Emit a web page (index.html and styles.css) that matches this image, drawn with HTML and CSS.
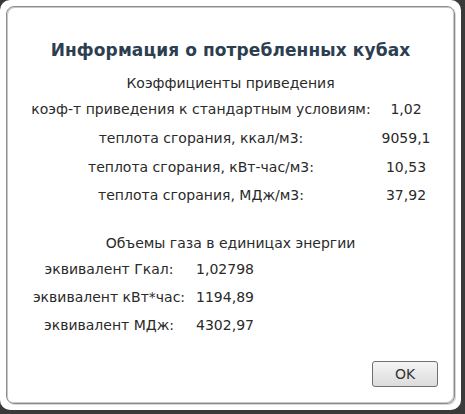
FILE: index.html
```html
<!DOCTYPE html>
<html lang="ru">
<head>
<meta charset="utf-8">
<link rel="stylesheet" href="styles.css">
</head>
<body>
<div class="dialog">
  <div class="inner">
    <h1 class="title">Информация о потребленных кубах</h1>
    <div class="section-head">Коэффициенты приведения</div>
    <table class="coef">
      <tr><td class="lbl">коэф-т приведения к стандартным условиям:</td><td class="val">1,02</td></tr>
      <tr><td class="lbl">теплота сгорания, ккал/м3:</td><td class="val">9059,1</td></tr>
      <tr><td class="lbl">теплота сгорания, кВт-час/м3:</td><td class="val">10,53</td></tr>
      <tr><td class="lbl">теплота сгорания, МДж/м3:</td><td class="val">37,92</td></tr>
    </table>
    <div class="section-head second">Объемы газа в единицах энергии</div>
    <table class="energy">
      <tr><td class="lbl">эквивалент Гкал:</td><td class="val">1,02798</td></tr>
      <tr><td class="lbl">эквивалент кВт*час:</td><td class="val">1194,89</td></tr>
      <tr><td class="lbl">эквивалент МДж:</td><td class="val">4302,97</td></tr>
    </table>
    <div class="actions"><button class="ok">OK</button></div>
  </div>
</div>
</body>
</html>
```
FILE: styles.css
```css
html, body { margin: 0; padding: 0; }
body {
  background: #3a3a3a;
  width: 465px;
  height: 414px;
  overflow: hidden;
  font-family: "DejaVu Sans", Verdana, sans-serif;
  color: #2a2a2a;
}
.dialog {
  width: 461px;
  height: 410px;
  background: #fff;
  border-radius: 10px;
  padding: 6px;
  box-sizing: border-box;
}
.inner {
  height: 100%;
  box-sizing: border-box;
  border: 1px solid #8c8c8c;
  box-shadow: inset 1px 1px 0 #c8c8c8, inset -1px -1px 0 #c8c8c8, 1px 1px 0 #d8d8d8;
  border-radius: 8px;
  position: relative;
}
.title {
  margin: 32px 0 0 0;
  font-size: 17px;
  line-height: 22px;
  font-weight: bold;
  color: #2c3e50;
  text-align: center;
  letter-spacing: 0.1px;
}
.section-head {
  text-align: center;
  font-size: 14px;
  line-height: 18px;
  margin-top: 13px;
}
.section-head.second { margin-top: 24px; }
table { border-collapse: collapse; font-size: 14px; }
td { text-align: center; padding: 0; }
.coef { margin: 3px 0 0 15px; }
.coef td { height: 28.7px; }
.coef .lbl { width: 358px; }
.coef .val { width: 52px; }
.energy { margin: 3px 0 0 18px; }
.energy td { height: 28px; }
.energy .lbl { width: 168px; }
.energy .val { width: 64px; }
.actions {
  position: absolute;
  right: 16px;
  bottom: 16px;
}
.ok {
  width: 66px;
  height: 26px;
  border: 1px solid #707070;
  border-radius: 3px;
  background: linear-gradient(#f4f4f4, #dcdcdc);
  font-family: "DejaVu Sans", Verdana, sans-serif;
  font-size: 14px;
  color: #333;
  padding: 0;
}
```
